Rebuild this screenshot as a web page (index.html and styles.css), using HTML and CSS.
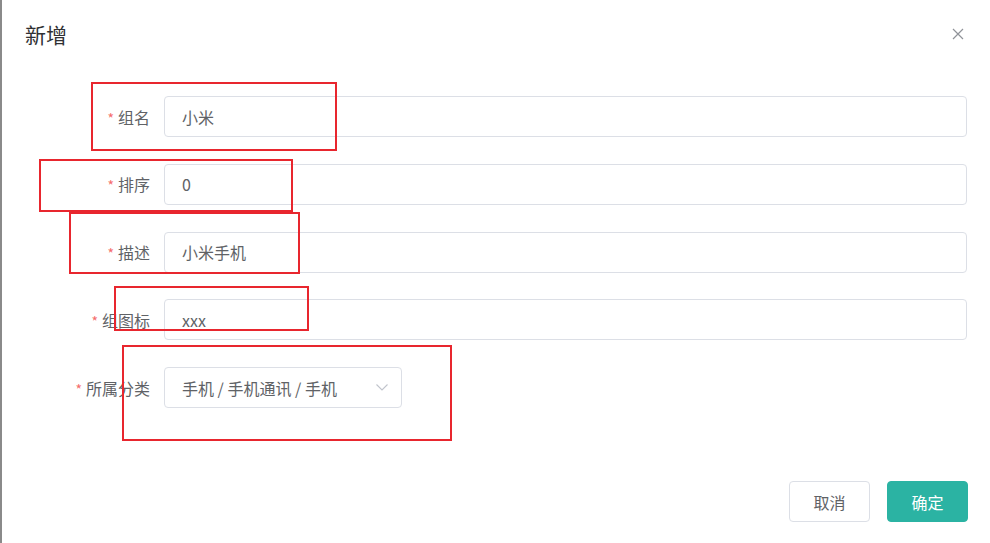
FILE: index.html
```html
<!DOCTYPE html>
<html lang="zh">
<head>
<meta charset="utf-8">
<title>新增</title>
<link rel="stylesheet" href="styles.css">
</head>
<body>
<div class="page">
  <span class="edge-mark"></span>
  <div class="header">
    <span class="title">新增</span>
    <svg class="close" width="12" height="12" viewBox="0 0 12 12"><path d="M1 1 L11 11 M11 1 L1 11" stroke="#909399" stroke-width="1.2" fill="none"/></svg>
  </div>
  <form class="form">
    <div class="row">
      <label class="label"><span class="star">*</span>组名</label>
      <div class="input">小米</div>
    </div>
    <div class="row">
      <label class="label"><span class="star">*</span>排序</label>
      <div class="input">0</div>
    </div>
    <div class="row">
      <label class="label"><span class="star">*</span>描述</label>
      <div class="input">小米手机</div>
    </div>
    <div class="row">
      <label class="label"><span class="star">*</span>组图标</label>
      <div class="input">xxx</div>
    </div>
    <div class="row">
      <label class="label"><span class="star">*</span>所属分类</label>
      <div class="input select">
        <span>手机 / 手机通讯 / 手机</span>
        <svg class="chev" width="12" height="7" viewBox="0 0 12 7"><path d="M0.5 0.5 L6 6 L11.5 0.5" stroke="#c0c4cc" stroke-width="1.1" fill="none"/></svg>
      </div>
    </div>
  </form>
  <div class="footer">
    <button class="btn" type="button">取消</button>
    <button class="btn primary" type="button">确定</button>
  </div>
  <div class="mark m1"></div>
  <div class="mark m2"></div>
  <div class="mark m3"></div>
  <div class="mark m4"></div>
  <div class="mark m5"></div>
</div>
</body>
</html>
```
FILE: styles.css
```css
html, body {
  margin: 0;
  padding: 0;
  background: #ffffff;
}
body {
  font-family: "Noto Sans CJK SC", "Noto Sans", sans-serif;
  color: #606266;
}
.page {
  position: relative;
  width: 990px;
  height: 543px;
  box-sizing: border-box;
  border-left: 2px solid #8a8a8a;
  display: flex;
  flex-direction: column;
  overflow: hidden;
}
.edge-mark {
  position: absolute;
  left: -2px;
  top: 30px;
  width: 1px;
  height: 13px;
  background: #5a6f8c;
}
.header {
  display: flex;
  justify-content: space-between;
  align-items: center;
  padding: 19px 26px 0 23px;
  height: 30px;
}
.title {
  font-size: 21px;
  line-height: 30px;
  color: #303133;
}
.close {
  display: block;
}
.form {
  margin: 0;
  padding: 47px 23px 0 0;
  display: flex;
  flex-direction: column;
  gap: 26.75px;
}
.row {
  display: flex;
  align-items: center;
}
.label {
  width: 148px;
  padding-right: 14px;
  text-align: right;
  font-size: 16px;
  color: #606266;
  flex: none;
}
.star {
  color: #f56c6c;
  font-size: 14px;
  margin-right: 4px;
}
.input {
  flex: 1;
  height: 41px;
  box-sizing: border-box;
  border: 1px solid #dcdfe6;
  border-radius: 4px;
  padding: 0 17px;
  display: flex;
  align-items: center;
  font-size: 16px;
  color: #606266;
}
.select {
  flex: none;
  width: 238px;
  justify-content: space-between;
  padding-right: 13px;
}
.chev {
  display: block;
}
.footer {
  margin-top: auto;
  display: flex;
  justify-content: flex-end;
  gap: 17px;
  padding: 0 22px 21px 0;
}
.btn {
  width: 81px;
  height: 41px;
  box-sizing: border-box;
  border: 1px solid #dcdfe6;
  border-radius: 4px;
  background: #ffffff;
  font-family: "Noto Sans CJK SC", "Noto Sans", sans-serif;
  font-size: 16px;
  color: #606266;
  padding: 0;
}
.btn.primary {
  background: #2bb3a3;
  border-color: #2bb3a3;
  color: #ffffff;
}
.mark {
  position: absolute;
  border: 2px solid #e8262e;
  box-sizing: border-box;
  pointer-events: none;
}
.m1 { left: 89px; top: 82px; width: 246px; height: 69px; }
.m2 { left: 37px; top: 159px; width: 254px; height: 53px; }
.m3 { left: 67px; top: 212px; width: 231px; height: 62px; }
.m4 { left: 112px; top: 286px; width: 195px; height: 45px; }
.m5 { left: 120px; top: 345px; width: 330px; height: 96px; }
```
